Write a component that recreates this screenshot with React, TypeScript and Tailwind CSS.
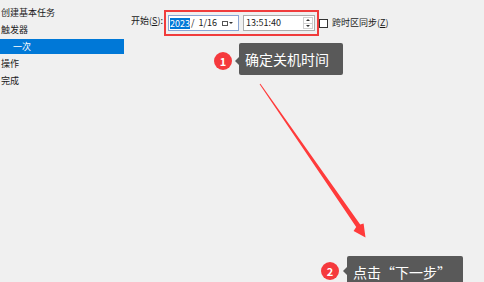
import * as React from 'react';

const font = { fontFamily: '"Noto Sans CJK SC", "Microsoft YaHei", sans-serif' };

const steps = ['创建基本任务', '触发器', '一次', '操作', '完成'];

// 左侧步骤列表
const StepList: React.FC = () => (
  <div className="w-[124px] shrink-0 pt-[4px] text-[9px] text-[#1a1a1a]">
    {steps.map((s) =>
      s === '一次' ? (
        <div key={s} className="h-[17px] py-[1px]">
          <div className="h-[15px] leading-[15px] bg-[#0078d7] text-white pl-[13px]">{s}</div>
        </div>
      ) : (
        <div key={s} className="h-[17px] leading-[17px] pl-[1px]">
          {s}
        </div>
      )
    )}
  </div>
);

const Annotation: React.FC<{ n: number; text: string; cx: number; cy: number; left: number; top: number; w: number; h: number }> = ({ n, text, cx, cy, left, top, w, h }) => (
  <>
    <div
      className="absolute w-[18px] h-[18px] rounded-full bg-[#f5393d] text-white text-[11px] font-bold flex items-center justify-center"
      style={{ left: cx - 9, top: cy - 9 }}
    >
      {n}
    </div>
    <div
      className="absolute bg-[#595959] rounded-[2px] text-white text-[14px] flex items-center pl-[6px]"
      style={{ left, top, width: w, height: h }}
    >
      <div
        className="absolute left-[-4px] w-0 h-0 border-y-[4px] border-y-transparent border-r-[4px] border-r-[#595959]"
        style={{ top: cy - top - 4 }}
      />
      {text}
    </div>
  </>
);

export default function App() {
  return (
    <div className="relative w-[484px] h-[282px] overflow-hidden bg-[#f0f0f0]" style={font}>
      <div className="flex">
        <StepList />
        <div className="flex items-start pl-[7px] pt-[10px] text-[9px] text-[#1a1a1a]">
          <span className="h-[26px] leading-[22px]">
            开始(<span className="underline">S</span>):
          </span>
          <div className="ml-[1px] flex gap-[4px] border-2 border-[#f03c3c] px-[2px] py-[3px]">
            {/* 日期 */}
            <div className="w-[71px] h-[16px] bg-white border border-[#8aa6d4] flex items-center pl-[1px]">
              <span className="bg-[#0078d7] text-white leading-[11px]">2023</span>
              <span className="ml-[1px]">/&nbsp;&nbsp;1/16</span>
              <span className="ml-auto mr-[5px] flex items-center gap-[1px]">
                <span className="w-[6px] h-[5px] border border-[#555]" />
                <span className="w-0 h-0 border-x-[2px] border-x-transparent border-t-[2px] border-t-[#333]" />
              </span>
            </div>
            {/* 时间 */}
            <div className="w-[72px] h-[16px] bg-white border border-[#adadad] flex items-center pl-[2px]">
              <span>13:51:40</span>
              <div className="ml-auto mr-[1px] w-[10px] h-[12px] flex flex-col border border-[#d0d0d0]">
                <div className="flex-1 flex items-center justify-center border-b border-[#d0d0d0]">
                  <span className="w-0 h-0 border-x-[2px] border-x-transparent border-b-[2px] border-b-[#333]" />
                </div>
                <div className="flex-1 flex items-center justify-center">
                  <span className="w-0 h-0 border-x-[2px] border-x-transparent border-t-[2px] border-t-[#333]" />
                </div>
              </div>
            </div>
          </div>
          <div className="flex items-center h-[26px]">
            <span className="w-[9px] h-[9px] bg-white border border-[#333]" />
            <span className="ml-[4px]">
              跨时区同步(<span className="underline">Z</span>)
            </span>
          </div>
        </div>
      </div>

      <Annotation n={1} text="确定关机时间" cx={223} cy={61} left={239} top={43} w={104} h={32} />
      <Annotation n={2} text="点击“下一步”" cx={330} cy={271} left={347} top={256} w={116} h={32} />

      <svg className="absolute left-0 top-0 pointer-events-none" width="484" height="282" viewBox="0 0 484 282">
        <polygon
          points="259.6,84.3 260.4,83.7 360.2,224.4 363.6,223.6 365.5,237.5 353.6,231 356.2,227"
          fill="#ff3b3b"
        />
      </svg>
    </div>
  );
}
